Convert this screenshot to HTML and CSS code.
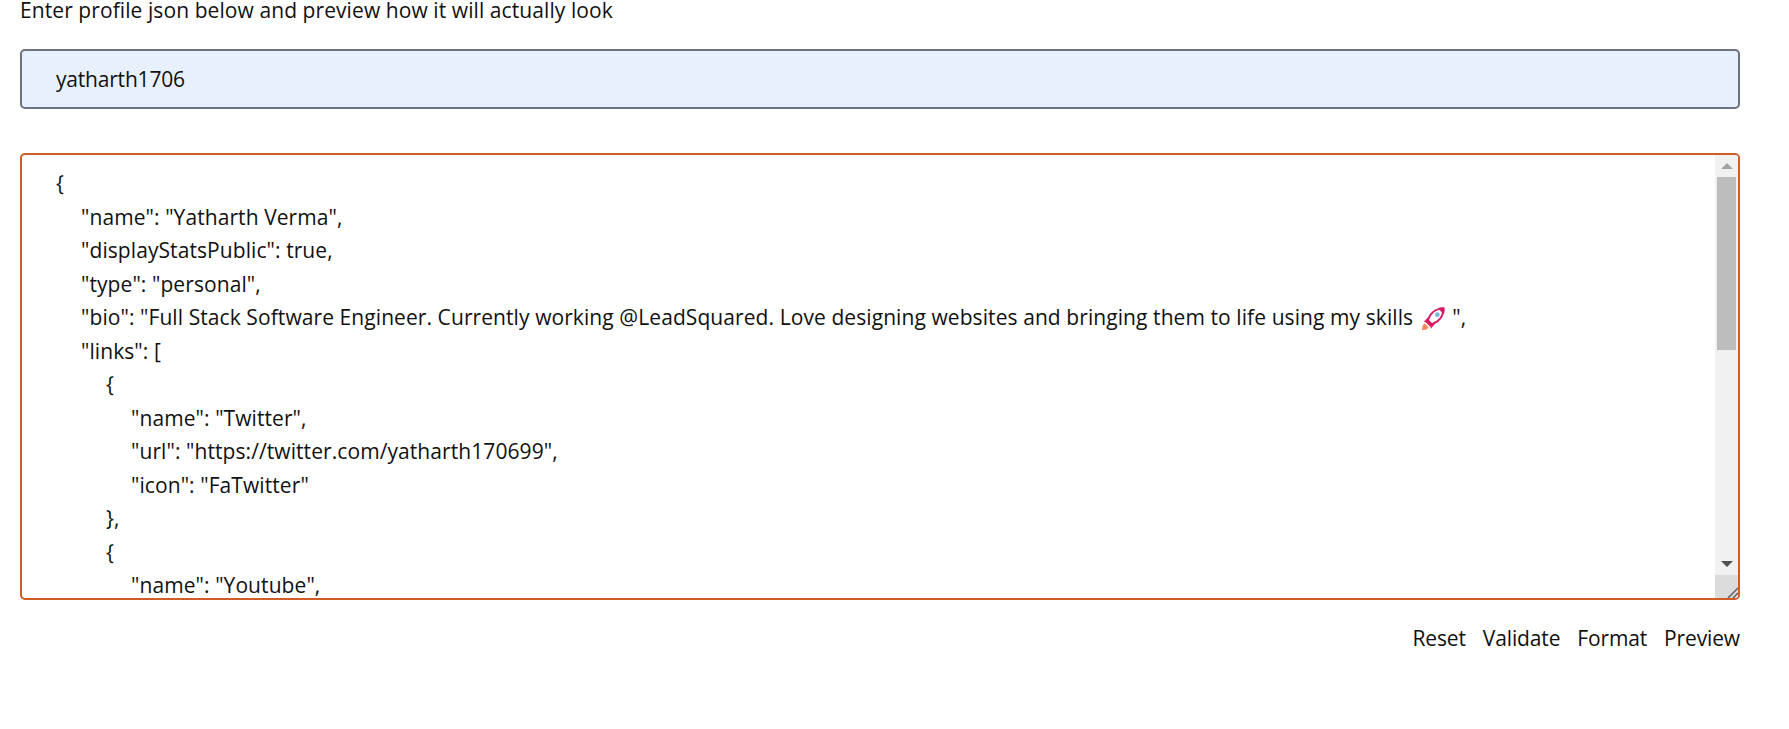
FILE: index.html
```html
<!DOCTYPE html>
<html lang="en">
<head>
<meta charset="utf-8">
<title>Profile preview</title>
<link rel="stylesheet" href="styles.css">
</head>
<body>
<main class="page">
  <p class="intro">Enter profile json below and preview how it will actually look</p>
  <div class="field username">yatharth1706</div>
  <div class="editor">
    <div class="code">
      <div class="line">{</div>
      <div class="line i1">"name": "Yatharth Verma",</div>
      <div class="line i1">"displayStatsPublic": true,</div>
      <div class="line i1">"type": "personal",</div>
      <div class="line i1">"bio": "Full Stack Software Engineer. Currently working @LeadSquared. Love designing websites and bringing them to life using my skills <svg class="rocket" viewBox="0 0 24 24" aria-hidden="true"><path fill="#ff8a65" d="M0 24c0-4 1-6 3-7l4 4c-1 2-3 3-7 3z"/><path fill="#e91e63" d="M8 9l4-1-6 9-4-2zM15 16l1-4-7 7 0 4z"/><path fill="#fff" stroke="#d81b60" stroke-width="2" d="M22 2c-5-.5-10 2-13 6l-3 6 4 4 6-3c4-3 6.500-8 6-13z"/><path fill="#d81b60" d="M23.500 .5c-2.500-.5-5-.2-7 .8l6.200 6.200c1-2 1.300-4.500.8-7zM5.500 12l6.500 6.500-3.500 2-5-5z"/><circle fill="#7ab8e0" cx="16" cy="8" r="2.500"/></svg> ",</div>
      <div class="line i1">"links": [</div>
      <div class="line i2">{</div>
      <div class="line i3">"name": "Twitter",</div>
      <div class="line i3">"url": "https://twitter.com/yatharth170699",</div>
      <div class="line i3">"icon": "FaTwitter"</div>
      <div class="line i2">},</div>
      <div class="line i2">{</div>
      <div class="line i3">"name": "Youtube",</div>
    </div>
    <div class="scrollbar">
      <div class="arrow up"></div>
      <div class="track"><div class="thumb"></div></div>
      <div class="arrow down"></div>
      <div class="corner">
        <svg viewBox="0 0 23 23" class="grip" aria-hidden="true"><path d="M13 23L23 13M18 23L23 18" stroke="#606060" stroke-width="1.500" fill="none"/></svg>
      </div>
    </div>
  </div>
  <div class="actions">
    <button class="action">Reset</button>
    <button class="action">Validate</button>
    <button class="action">Format</button>
    <button class="action">Preview</button>
  </div>
</main>
</body>
</html>
```
FILE: styles.css
```css
html, body {
  margin: 0;
  padding: 0;
  background: #fff;
}
body {
  font-family: "Open Sans", "Noto Sans", sans-serif;
  font-size: 21px;
  letter-spacing: 0.08px;
  color: #111;
  overflow: hidden;
}
.page {
  width: 1720px;
  margin-left: 20px;
  display: flex;
  flex-direction: column;
}
.intro {
  margin: 0;
  height: 21px;
  line-height: 21px;
}
.field {
  margin-top: 28px;
  height: 60px;
  box-sizing: border-box;
  border: 2px solid #6b7280;
  border-radius: 5px;
  background: #e8f0fe;
  padding-left: 34px;
  line-height: 56px;
  letter-spacing: -0.2px;
}
.editor {
  margin-top: 44px;
  height: 447px;
  box-sizing: border-box;
  border: 2px solid #d05c27;
  border-radius: 5px;
  display: flex;
  overflow: hidden;
}
.code {
  flex: 1;
  min-width: 0;
  padding: 12px 0 0 34px;
  overflow: hidden;
}
.line {
  height: 33.500px;
  line-height: 33.500px;
  white-space: pre;
}
.i1 { padding-left: 25px; }
.i2 { padding-left: 50px; }
.i3 { padding-left: 75px; }
.rocket {
  width: 23px;
  height: 23px;
  margin: 0 2px 0 3px;
  vertical-align: -5px;
}
.scrollbar {
  width: 23px;
  flex: none;
  background: #f1f1f1;
  display: flex;
  flex-direction: column;
  align-items: center;
}
.arrow {
  flex: none;
  width: 0;
  height: 0;
  border-left: 6px solid transparent;
  border-right: 6px solid transparent;
}
.up {
  margin-top: 8px;
  border-bottom: 6px solid #a3a3a3;
}
.track {
  flex: 1;
  width: 100%;
  padding: 8px 2px 0;
  box-sizing: border-box;
}
.thumb {
  height: 173px;
  background: #bdbdbd;
}
.down {
  margin-bottom: 8px;
  border-top: 6px solid #505050;
}
.corner {
  flex: none;
  width: 100%;
  height: 23px;
  background: #dcdcdc;
}
.grip {
  display: block;
  width: 23px;
  height: 23px;
}
.actions {
  margin-top: 23px;
  display: flex;
  justify-content: flex-end;
  gap: 17px;
}
.action {
  border: 0;
  background: none;
  padding: 0;
  font: inherit;
  letter-spacing: -0.14px;
  color: inherit;
  line-height: 30px;
}
```
